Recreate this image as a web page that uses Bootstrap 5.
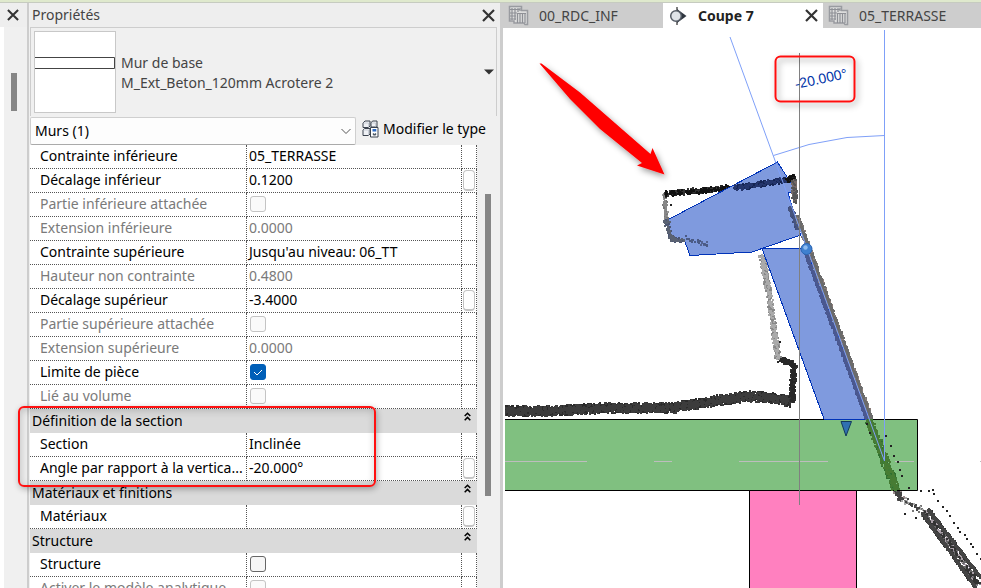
<!DOCTYPE html>
<html lang="fr">
<head>
<meta charset="utf-8">
<meta name="viewport" content="width=device-width, initial-scale=1">
<title>Coupe 7</title>
<link href="https://cdn.jsdelivr.net/npm/bootstrap@5.3.0/dist/css/bootstrap.min.css" rel="stylesheet">
<style>
  body { font-family: "Noto Sans", "Open Sans", sans-serif; font-size: 14px; line-height: 20px; color: #000; background: #fff; }
  button { color: inherit; }
  .app-strip { height: 3px; background: #dfe9cd; border-bottom: 1px solid #c6cbc0; }
  .main-area { min-height: 0; }
  .bare { border: 0; background: none; padding: 0; line-height: 0; }
  .dock { width: 27px; flex: none; background: #f0f0f0; }
  .bar { height: 24px; background: #eee; color: #444; flex: none; }
  .dock .bar { padding-left: 7px; }
  .panel .bar { padding: 0 5px 0 2px; }
  .dock-body { border-left: 4px solid #fff; }
  .dock-thumb { width: 6px; height: 38px; margin: 46px 0 0 7px; background: #868686; }
  .panel { flex: 1 1 476px; background: #f0f0f0; border-left: 2px solid #cdcdcd; border-right: 3px solid #cdcdcd; padding-left: 1px; }
  .type-pick { height: 89px; border: 1px solid #cdcdcd; border-bottom: 0; background: #f0f0f0; color: #444; padding: 3px 2px 3px 3px; margin-right: 3px; }
  .type-name { padding: 2px 0 0 5px; }
  .thumb { width: 82px; height: 82px; border: 1px solid #c8c8c8; background: #fff; flex: none; }
  .cat-row { height: 29px; flex: none; }
  .cat { width: 326px; flex: 0 1 auto; height: 28px; font-size: 14px; padding: 0 24px 0 4px; color: #000; border: 1px solid #cfcfcf; border-bottom-color: #aaa; border-radius: 2px; background-color: #fdfdfd; background-position: right 4px center; background-size: 10px;
    background-image: url("data:image/svg+xml,%3Csvg xmlns='http://www.w3.org/2000/svg' viewBox='0 0 10 10'%3E%3Cpath d='M.5 3 5 7.500 9.500 3' fill='none' stroke='%23555'/%3E%3C/svg%3E"); }
  .edit-type { font-size: 14px; line-height: 20px; white-space: nowrap; color: #000; padding: 0 0 4px 6px; }
  .sheet { table-layout: fixed; border-collapse: separate; border-spacing: 0; }
  .sheet .name-col { width: 217px; }
  .sheet .assoc-col { width: 15px; }
  .grid-area { flex: 1 1 0; min-height: 0; }
  .grid-wrap { flex: 1 1 auto; min-width: 0; }
  .sheet th, .sheet td { height: 24px; line-height: 20px; padding: 0 2px 2px; font-weight: 400; white-space: nowrap; overflow: hidden; text-overflow: ellipsis; background: #fff; border-right: 1px dotted #555; border-bottom: 1px dotted #555; vertical-align: middle; }
  .sheet th { padding-left: 10px; padding-right: 0; }
  .sheet .group-head th { background: #dadada; border: 0; padding: 0 6px 1px 2px; }
  .sheet .off { color: #7a7a7a; }
  .sheet .form-check-input { display: block; width: 16px; height: 16px; margin: 1px 0 0 1px; border: 1px solid #666; border-radius: 3px; background-color: #f6f6f6; }
  .sheet .form-check-input:disabled { border-color: #c4c4c4; background-color: #fafafa; opacity: 1; }
  .sheet .form-check-input:checked { border-color: #005fb8; background-color: #005fb8; background-size: 12px;
    background-image: url("data:image/svg+xml,%3Csvg xmlns='http://www.w3.org/2000/svg' viewBox='0 0 12 12'%3E%3Cpath d='M2 6l3 3 5-5' fill='none' stroke='%23fff'/%3E%3C/svg%3E"); }
  .sheet td.assoc { padding: 0 1px; }
  .assoc button { display: block; width: 12px; height: 21px; padding: 0; border: 1px solid #c4c4c4; border-bottom-width: 2px; border-radius: 4px; background: #fdfdfd; }
  .marked { position: relative; }
  .marked::after { content: ""; position: absolute; left: -12px; top: -3px; width: 358px; height: 81px; border: 2px solid #f11; border-radius: 6px; box-shadow: 1px 2px 6px rgba(0,0,0,.3), inset 1px 2px 8px rgba(0,0,0,.2); pointer-events: none; }
  .scroll { width: 23px; flex: none; padding: 49px 0 0 8px; }
  .scroll-thumb { width: 6px; height: 302px; background: #868686; }
  .view { flex: 1 1 478px; }
  .view-tabs { height: 25px; background: #cdcdcd; flex: none; color: #444; }
  .view-tab { height: 25px; width: 160px; padding: 0 5px; gap: 10px; color: #444; background: #cdcdcd; text-decoration: none; white-space: nowrap; flex: none; }
  .view-tab.on { background: #fff; color: #222; font-weight: 700; }
  .view-tab a { color: inherit; text-decoration: none; }
  .canvas { flex: 1 1 0; min-height: 0; }
  .angle { font-family: "Liberation Sans", Arial, sans-serif; font-size: 14px; fill: #0033a8; }
</style>
<script src="https://cdn.jsdelivr.net/npm/bootstrap@5.3.0/dist/js/bootstrap.bundle.min.js"></script>
</head>
<body class="vh-100 overflow-hidden d-flex flex-column">
<svg width="0" height="0" class="position-absolute" aria-hidden="true">
  <symbol id="close" viewBox="0 0 13 13"><path d="M1 1l11 11M12 1L1 12" stroke="#333" stroke-width="2.200" fill="none"/></symbol>
  <symbol id="up" viewBox="0 0 7 9"><path d="M.7 4L3.500 1.200 6.300 4M.7 8.200L3.500 5.400 6.300 8.200" stroke="#000" stroke-width="1.500" fill="none"/></symbol>
  <symbol id="plan" viewBox="0 0 21 21">
    <path d="M1.500 1.500h12v4h6v14h-2.500l-1 -1.500H6v-2H1.500z" fill="#dcdcdc" stroke="#999ba0" stroke-width="1.500"/>
    <path d="M4 3v12M7 3v12M10 3v4M12 3v3M2 4.500h10M2 8h7M2 11h6M2 14h6M9.500 9v9M12 9v9M14.500 8v10M17 8v10M9 8.500h9" stroke="#8e9096" stroke-width="1.200" fill="none"/>
  </symbol>
</svg>
<div class="app-strip flex-shrink-0"></div>
<div class="main-area d-flex flex-grow-1">
  <aside class="dock d-flex flex-column">
    <div class="bar d-flex align-items-center"><button class="bare" aria-label="Fermer le volet"><svg width="12" height="12"><use href="#close"/></svg></button></div>
    <div class="dock-body flex-grow-1"><div class="dock-thumb"></div></div>
  </aside>

  <section class="panel d-flex flex-column" aria-label="Propriétés">
    <header class="bar d-flex align-items-center justify-content-between">
      <span>Propriétés</span>
      <button class="bare" aria-label="Fermer"><svg width="13" height="13"><use href="#close"/></svg></button>
    </header>
    <button class="type-pick d-flex align-items-center text-start flex-shrink-0">
      <span class="thumb"><svg width="80" height="80" viewBox="0 0 80 80"><path d="M0 25.500h79.500v11H0" fill="none" stroke="#444"/></svg></span>
      <span class="type-name flex-grow-1">Mur de base<br>M_Ext_Beton_120mm Acrotere 2</span>
      <svg width="10" height="6" viewBox="0 0 10 6"><path d="M0 .5h10L5 5.500z" fill="#333"/></svg>
    </button>
    <div class="cat-row d-flex align-items-center">
      <select class="form-select cat" aria-label="Catégorie"><option>Murs (1)</option></select>
      <button class="bare edit-type d-flex align-items-center gap-1">
        <svg width="17" height="18" viewBox="0 0 17 18"><g fill="#eef0f4" stroke="#3a424e"><path d="M1 3L3 1h5v5L6.500 7.500H1zM9 3l1.500-2H15v6H9zM1 10l1.500-1.500H8V14l-1.500 1.500H1z"/><path d="M1 3h5.500v4.500M9 3h4.500v4M1 10h5.500v5.500" fill="none" stroke="#b4bac4" stroke-width=".6"/><path d="M8.500 7.500h7.500v9.500H8.500z" fill="#fff"/></g><path d="M10.500 9h3.800v2.500h-3.800z" fill="#2d6bc4"/><path d="M10.500 14l1-1 1 1 1-1 1 1-1 1.500h-2z" fill="#4c5866"/></svg>
        Modifier le type</button>
    </div>
    <div class="grid-area d-flex">
      <div class="grid-wrap">
      <table class="sheet w-100">
        <colgroup><col class="name-col"><col><col class="assoc-col"></colgroup>
        <tbody>
          <tr><th scope="row">Contrainte inférieure</th><td>05_TERRASSE</td><td></td></tr>
          <tr><th scope="row">Décalage inférieur</th><td>0.1200</td><td class="assoc"><button aria-label="Associer Décalage inférieur"></button></td></tr>
          <tr><th scope="row" class="off"><label for="c1">Partie inférieure attachée</label></th><td><input class="form-check-input" type="checkbox" id="c1" disabled></td><td></td></tr>
          <tr><th scope="row" class="off">Extension inférieure</th><td class="off">0.0000</td><td></td></tr>
          <tr><th scope="row">Contrainte supérieure</th><td>Jusqu'au niveau: 06_TT</td><td></td></tr>
          <tr><th scope="row" class="off">Hauteur non contrainte</th><td class="off">0.4800</td><td></td></tr>
          <tr><th scope="row">Décalage supérieur</th><td>-3.4000</td><td class="assoc"><button aria-label="Associer Décalage supérieur"></button></td></tr>
          <tr><th scope="row" class="off"><label for="c2">Partie supérieure attachée</label></th><td><input class="form-check-input" type="checkbox" id="c2" disabled></td><td></td></tr>
          <tr><th scope="row" class="off">Extension supérieure</th><td class="off">0.0000</td><td></td></tr>
          <tr><th scope="row"><label for="c3">Limite de pièce</label></th><td><input class="form-check-input" type="checkbox" id="c3" checked></td><td></td></tr>
          <tr><th scope="row" class="off"><label for="c4">Lié au volume</label></th><td><input class="form-check-input" type="checkbox" id="c4" disabled></td><td></td></tr>
        </tbody>
        <tbody class="marked">
          <tr class="group-head"><th colspan="3"><div class="d-flex justify-content-between"><span>Définition de la section</span><button class="bare" aria-label="Réduire Définition de la section"><svg width="7" height="9" class="mb-2"><use href="#up"/></svg></button></div></th></tr>
          <tr><th scope="row">Section</th><td>Inclinée</td><td></td></tr>
          <tr><th scope="row">Angle par rapport à la vertica...</th><td>-20.000°</td><td class="assoc"><button aria-label="Associer Angle"></button></td></tr>
        </tbody>
        <tbody>
          <tr class="group-head"><th colspan="3"><div class="d-flex justify-content-between"><span>Matériaux et finitions</span><button class="bare" aria-label="Réduire Matériaux et finitions"><svg width="7" height="9" class="mb-2"><use href="#up"/></svg></button></div></th></tr>
          <tr><th scope="row">Matériaux</th><td></td><td class="assoc"><button aria-label="Associer Matériaux"></button></td></tr>
        </tbody>
        <tbody>
          <tr class="group-head"><th colspan="3"><div class="d-flex justify-content-between"><span>Structure</span><button class="bare" aria-label="Réduire Structure"><svg width="7" height="9" class="mb-2"><use href="#up"/></svg></button></div></th></tr>
          <tr><th scope="row"><label for="c5">Structure</label></th><td><input class="form-check-input" type="checkbox" id="c5"></td><td></td></tr>
          <tr><th scope="row" class="off"><label for="c6">Activer le modèle analytique</label></th><td><input class="form-check-input" type="checkbox" id="c6" disabled></td><td></td></tr>
        </tbody>
      </table>
      </div>
      <div class="scroll"><div class="scroll-thumb"></div></div>
    </div>
  </section>

  <main class="view d-flex flex-column overflow-hidden">
    <nav class="view-tabs d-flex" aria-label="Vues">
      <a href="#" class="view-tab d-flex align-items-center"><svg width="21" height="21"><use href="#plan"/></svg>00_RDC_INF</a>
      <div class="view-tab on d-flex align-items-center">
        <svg width="20" height="20" viewBox="0 0 20 20"><path d="M9 1v18" stroke="#555" stroke-width="1.500"/><path d="M9 3l9.500 7L9 17z" fill="#2f3640"/><circle cx="8" cy="10" r="5.300" fill="#dfe3e8" stroke="#555c66" stroke-width="1.500"/></svg>
        <a href="#" class="flex-grow-1" aria-current="page">Coupe 7</a>
        <button class="bare" aria-label="Fermer Coupe 7"><svg width="13" height="13"><use href="#close"/></svg></button>
      </div>
      <a href="#" class="view-tab d-flex align-items-center"><svg width="21" height="21"><use href="#plan"/></svg>05_TERRASSE</a>
    </nav>
    <svg class="canvas w-100" viewBox="503 28 478 560" preserveAspectRatio="xMinYMin slice" role="img" aria-label="Coupe du mur incliné">
      <defs>
        <filter id="sh" x="-20%" y="-20%" width="150%" height="150%"><feDropShadow dx="2" dy="3" stdDeviation="3" flood-opacity=".4"/></filter>
        <clipPath id="drawing"><path d="M505 28h600v700H505z"/></clipPath>
      </defs>
      <g clip-path="url(#drawing)"><g id="cloud-back" shape-rendering="crispEdges"></g></g>
      <path d="M505 419.500H917.500V490.500H505z" fill="#80c080"/>
      <path d="M505 419.500H917.500V490.500H505" fill="none" stroke="#000"/>
      <path d="M749.500 588V490.500H856.500V588" fill="#ff80bf" stroke="#000"/>
      <path d="M505 461.500h82M654 461.500h18M739 461.500h89M895 461.500h19M980 461.500h1" stroke="#bdbdbd"/>
      <g fill="#7f9ade" stroke="#0033b8" shape-rendering="crispEdges">
        <path d="M777.500 162L796 191 788 193 791.500 205 800.500 235 752 252 690 255.500 684.500 240.500 671.500 241 665.500 221z"/>
        <path d="M762 248.500H806.500L869 419H824z"/>
      </g>
      <g id="cloud-front" shape-rendering="crispEdges"></g>
      <g fill="none" stroke="#7fa0f8">
        <path d="M730 37L884.500 461V30M773.500 155.500L809 144.500 847 137.500 884.500 135.500"/>
      </g>
      <path d="M799.500 53V505" stroke="#808080"/>
      <path d="M841 421.500h10.500L846 436z" fill="#3070b0" stroke="#123a5c"/>
      <circle cx="806.500" cy="249" r="5.500" fill="#3f80d0" stroke="#2b66b5"/><circle cx="805.500" cy="247.500" r="2.200" fill="#8fbcf0"/>
      <path d="M539.500 63.500L541.500 63.500 580 92.500 650.500 154 652.500 148 664.500 174.500 637 165.500 642 163 600 129 570 99z" fill="#f00" filter="url(#sh)"/>
      <rect x="775.500" y="56.500" width="79" height="45" rx="5" fill="none" stroke="#f11" stroke-width="2" filter="url(#sh)"/>
      <text class="angle" transform="translate(796 89) rotate(-12)">-20.000°</text>
    </svg>
  </main>
</div>
<script>
  // Point cloud of the surveyed section: [layer, colours, band width, points per pixel, polyline]
  const bands = [
    ['back', ['#333', '#2b2b2b', '#3c3c3c'], 7, 15, [[503,411],[550,411],[610,408],[670,408],[710,402],[748,396],[775,398],[791,402]]],
    ['back', ['#333', '#292929'], 4, 8, [[792,402],[794,364],[778,359]]],
    ['back', ['#999', '#888', '#aaa'], 4, 6, [[762,255],[770,300],[778,359]]],
    ['back', ['#999', '#777', '#888'], 3, 4, [[665,193],[666,220]]],
    ['front', ['#4a5573', '#5a6272'], 4, 4, [[666,220],[671,239],[684,241]]],
    ['front', ['#536392', '#4a5a85'], 4, 1, [[684,238],[708,245]]],
    ['back', ['#222', '#333', '#111'], 4, 6, [[665,194],[730,188]]],
    ['front', ['#1b2a5e', '#142452', '#24356c'], 4, 6, [[734,188],[787,180]]],
    ['front', ['#222', '#111'], 4, 6, [[787,180],[795,177]]],
    ['front', ['#666', '#776a68', '#555'], 4, 5, [[794,180],[795,203]]],
    ['front', ['#3c4b7c', '#46547e'], 3, 6, [[790,207],[798,229]]],
    ['front', ['#777', '#8a7c78', '#6b6b6b'], 3, 9, [[797,216],[809,249],[871,419]]],
    ['front', ['#46558e', '#4a5890'], 2, 6, [[805,251],[867,419]]],
    ['front', ['#2f7030', '#3f7c36', '#477c33'], 6, 9, [[869,420],[896,490]]],
    ['back', ['#666', '#998b8b', '#444'], 5, 6, [[896,490],[902,500]]],
    ['back', ['#777', '#aaa', '#444'], 8, 1.5, [[902,500],[924,512]]],
    ['back', ['#8a8290', '#666', '#aaa0a8', '#333'], 5, 4, [[925,511],[979,585]]],
    ['back', ['#333', '#444'], 2, 8, [[922,513],[976,588]]],
    ['back', ['#333', '#444'], 2, 8, [[928,509],[981,578]]]
  ];
  const dots = [[886,436],[891,446],[894,456],[898,462],[900,470],[902,476],[909,488],[921,491],[929,491],[933,490],[934,494],[938,501],[943,507],[947,511],[950,516],[954,523],[958,528],[960,532],[965,535],[967,539],[971,544],[973,547],[977,554],[981,559],[671,205],[780,342],[905,514],[916,518],[867,424],[870,433]];
  let seed = 7;
  const rnd = () => (seed = (seed * 16807) % 2147483647) / 2147483647;
  const put = (layer, fill, d) => {
    const p = document.createElementNS('http://www.w3.org/2000/svg', 'path');
    p.setAttribute('d', d); p.setAttribute('fill', fill);
    document.getElementById('cloud-' + layer).appendChild(p);
  };
  const square = (x, y) => `M${Math.round(x) - 1} ${Math.round(y) - 1}h2v2h-2z`;
  for (const [layer, colours, width, density, line] of bands) {
    const out = colours.map(() => '');
    for (let i = 1; i < line.length; i++) {
      const [x0, y0] = line[i - 1], [x1, y1] = line[i];
      const len = Math.hypot(x1 - x0, y1 - y0), nx = -(y1 - y0) / len, ny = (x1 - x0) / len;
      for (let n = 0; n < len * density; n++) {
        const t = rnd(), o = (rnd() + rnd() - 1) * width * .8;
        out[Math.floor(rnd() * colours.length)] += square(x0 + (x1 - x0) * t + nx * o, y0 + (y1 - y0) * t + ny * o);
      }
    }
    out.forEach((d, i) => put(layer, colours[i], d));
  }
  put('front', '#222', dots.map(([x, y]) => square(x, y)).join(''));
</script>
</body>
</html>
